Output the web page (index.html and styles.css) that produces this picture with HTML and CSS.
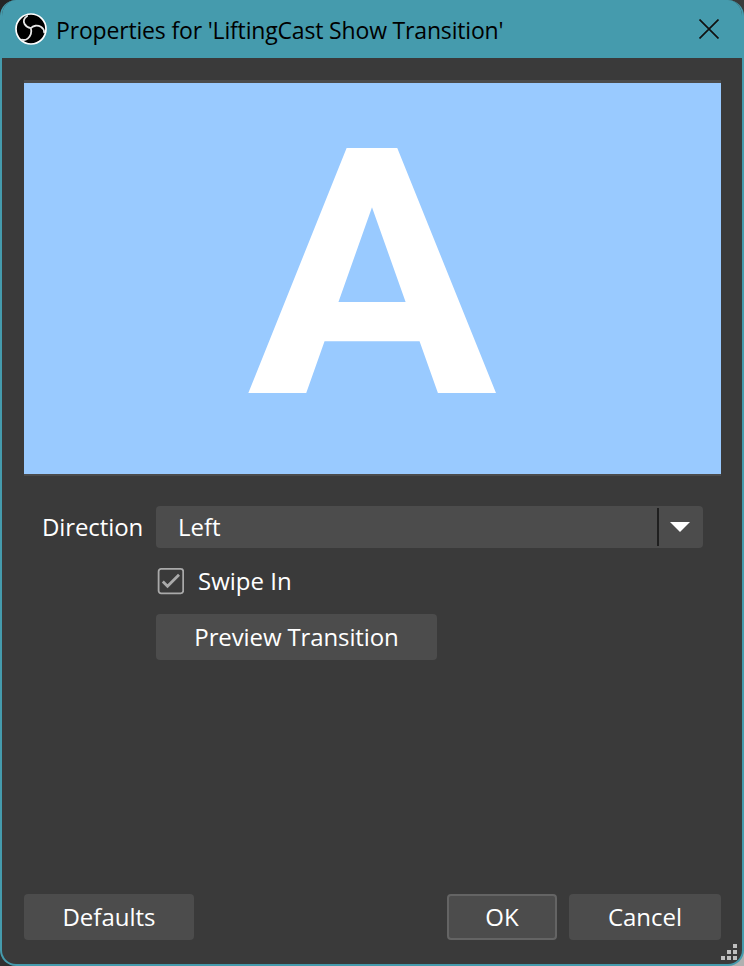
FILE: index.html
```html
<!DOCTYPE html>
<html lang="en">
<head>
<meta charset="utf-8">
<title>Properties for 'LiftingCast Show Transition'</title>
<link rel="stylesheet" href="styles.css">
</head>
<body>
<main class="window">
  <header class="titlebar">
    <svg class="logo" viewBox="0 0 32 32" aria-hidden="true">
      <circle cx="16" cy="16" r="15" fill="#000" stroke="#fff" stroke-width="1.7"/>
      <path d="M12.2 3C8.8 5 8 8.3 9.6 11C11 13.5 13.3 14.8 15.8 15.2M15.8 15.2C18 12.4 22.6 11.9 25.8 13.8C28 15.2 29.2 17 29.2 19.4M15.8 15.2C17.2 19 15.6 23.4 12.7 25.6C10.8 27 8.8 27.4 6.8 26.6" fill="none" stroke="#e8e8e8" stroke-width="1.8" stroke-linecap="round"/>
    </svg>
    <h1 class="title">Properties for 'LiftingCast Show Transition'</h1>
    <svg class="close" viewBox="0 0 20 20" aria-label="Close"><path d="M.5.5 19.5 19.5M19.5.5.5 19.5"/></svg>
  </header>
  <section class="content">
    <div class="preview"><span class="letter">A</span></div>
    <div class="form">
      <label class="label">Direction</label>
      <div class="select"><span class="value">Left</span><span class="arrow"><svg viewBox="0 0 20 10"><path d="M0 0H20L10 10Z"/></svg></span></div>
      <div class="check">
        <svg class="box" viewBox="0 0 28 28"><rect x="2.6" y="1.9" width="24.6" height="24.4" rx="2.5"/><path d="M6.8 14.6 11.5 19.2 23 7.7"/></svg>
        <span class="check-text">Swipe In</span>
      </div>
      <button class="button preview-button"><span>Preview Transition</span></button>
    </div>
    <footer class="actions">
      <button class="button defaults"><span>Defaults</span></button>
      <button class="button ok"><span>OK</span></button>
      <button class="button cancel"><span>Cancel</span></button>
    </footer>
  </section>
  <svg class="grip" viewBox="0 0 16 16"><path d="M12 0h4v4h-4zM6 6h4v4H6zM12 6h4v4h-4zM0 12h4v4H0zM6 12h4v4H6zM12 12h4v4h-4z"/></svg>
</main>
</body>
</html>
```
FILE: styles.css
```css
* { box-sizing: border-box; }
html { background: linear-gradient(90deg, #252525 50%, #3b3b3b 50%) top / 100% 50% no-repeat, linear-gradient(90deg, #303030 50%, #b0b0b0 50%); }
body { margin: 0; height: 966px; overflow: hidden; font-family: "Open Sans", "Noto Sans", sans-serif; }
.window { position: relative; width: 744px; height: 966px; border: 2px solid #459bad; border-top: 0; border-radius: 16px; background: #3a3a3a; overflow: hidden; display: flex; flex-direction: column; }
.titlebar { flex: none; height: 58px; background: #459bad; display: flex; align-items: center; padding: 0 23px 0 13px; }
.logo { width: 32px; height: 32px; flex: none; }
.title { margin: 2px 0 0 9px; font: 400 23px/32px "Open Sans", sans-serif; letter-spacing: -.17px; color: #000; white-space: nowrap; }
.close { width: 20px; height: 20px; margin-left: auto; }
.close path { fill: none; stroke: #111; stroke-width: 1.7; }
.content { flex: 1; padding: 22px 21px 24px 22px; display: flex; flex-direction: column; }
.preview { height: 396px; border-top: 3px solid #4b4b4b; border-bottom: 2px solid #4b4b4b; background: #99caff; background-clip: padding-box; display: flex; justify-content: center; align-items: center; }
.letter { font: 700 344.5px/391px Roboto, sans-serif; color: #fff; transform: translate(-.7px, -3px) scaleX(1.079); }
.form { margin-top: 30px; padding-right: 18px; display: grid; grid-template-columns: 132px 1fr; grid-template-rows: 42px 28px 46px; row-gap: 19px; color: #fff; font-size: 24px; line-height: 42px; }
.label { padding-left: 18px; letter-spacing: -.1px; }
.select { display: flex; align-items: center; background: #4c4c4c; border-radius: 4px; }
.value { flex: 1; padding-left: 22px; }
.arrow { width: 46px; height: 38px; padding-right: 2px; border-left: 2px solid #1f1f1f; display: flex; align-items: center; justify-content: center; }
.arrow svg { width: 20px; height: 10px; fill: #fff; }
.check { grid-column: 2; display: flex; align-items: center; gap: 14px; }
.box { width: 28px; height: 28px; fill: none; stroke: #aaa; stroke-width: 1.8; }
.box path { stroke-width: 2.8; }
.button { border: 0; border-radius: 4px; height: 46px; padding: 0; background: #4c4c4c; color: #fff; font: 400 24px/46px "Open Sans", sans-serif; }
.preview-button { grid-column: 2; width: 281px; letter-spacing: -.12px; }
.actions { margin-top: auto; display: flex; }
.defaults { width: 170px; }
.ok { width: 110px; margin-left: auto; border: 2px solid #646464; line-height: 42px; }
.cancel { width: 152px; margin-left: 12px; }
.grip { position: absolute; right: 5px; bottom: 4px; width: 16px; height: 16px; fill: #bfbfbf; }
```
